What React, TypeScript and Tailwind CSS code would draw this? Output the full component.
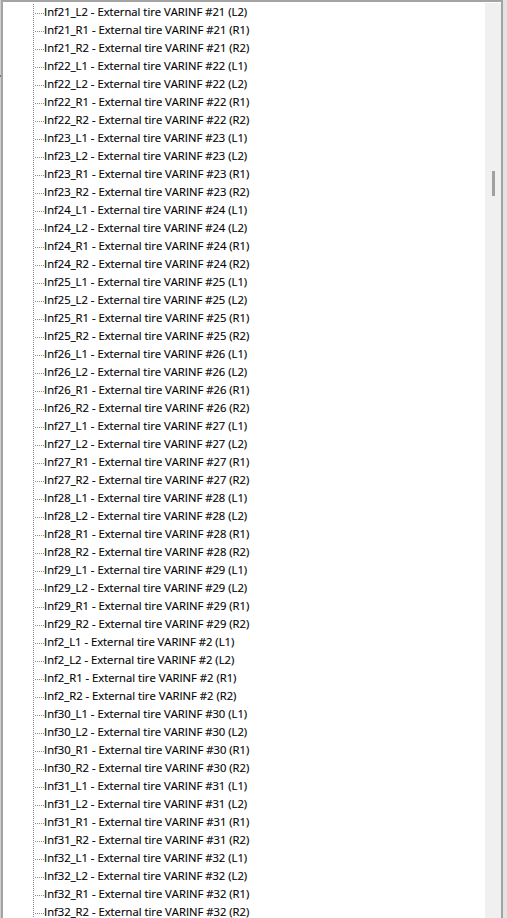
import React from "react";

const sides = ["L1", "L2", "R1", "R2"];

function buildItems(): string[] {
  const groups: { n: number; s: string[] }[] = [{ n: 21, s: ["L2", "R1", "R2"] }];
  for (let n = 22; n <= 29; n++) groups.push({ n, s: sides });
  groups.push({ n: 2, s: sides });
  for (let n = 30; n <= 32; n++) groups.push({ n, s: sides });
  const out: string[] = [];
  for (const g of groups) {
    for (const s of g.s) out.push(`Inf${g.n}_${s} - External tire VARINF #${g.n} (${s})`);
  }
  return out;
}

const items = buildItems();

function TreeRow({ label }: { label: string }) {
  return (
    <div className="flex h-[18px] shrink-0 items-start">
      <div className="w-[30px] shrink-0" />
      <div className="w-px shrink-0 self-stretch bg-[repeating-linear-gradient(to_bottom,#8a8a8a_0px,#8a8a8a_1px,transparent_1px,transparent_2px)]" />
      <div className="mt-[9px] h-px w-[10px] shrink-0 bg-[repeating-linear-gradient(to_right,transparent_0px,transparent_1px,#8a8a8a_1px,#8a8a8a_2px)]" />
      <span className="whitespace-nowrap font-['Open_Sans',sans-serif] text-[11.25px] leading-[15px] text-black [-webkit-text-stroke:0.15px_#000]">
        {label}
      </span>
    </div>
  );
}

export default function App() {
  return (
    <div className="flex h-[918px] w-[507px] overflow-hidden bg-[#dcdcdc]">
      <div className="flex w-px shrink-0 flex-col bg-[#cfcfcf]">
        <div className="mt-[75px] h-[2px] bg-[#7a7a7a]" />
      </div>
      <div className="flex flex-1 border-l-2 border-r-2 border-t-2 border-[#a3a3a3] bg-white">
        <div className="flex flex-1 flex-col overflow-hidden pt-[2px]">
          {items.map((label) => (
            <TreeRow key={label} label={label} />
          ))}
        </div>
        <div className="flex w-[16px] shrink-0 flex-col bg-white pt-px">
          <div className="flex flex-1 flex-col bg-[#f0f0f0]">
            <div className="ml-[7px] mt-[168px] h-[25px] w-[3px] bg-[#a0a0a0]" />
          </div>
        </div>
      </div>
      <div className="w-[4px] shrink-0 bg-[#e3e3e3]" />
    </div>
  );
}
